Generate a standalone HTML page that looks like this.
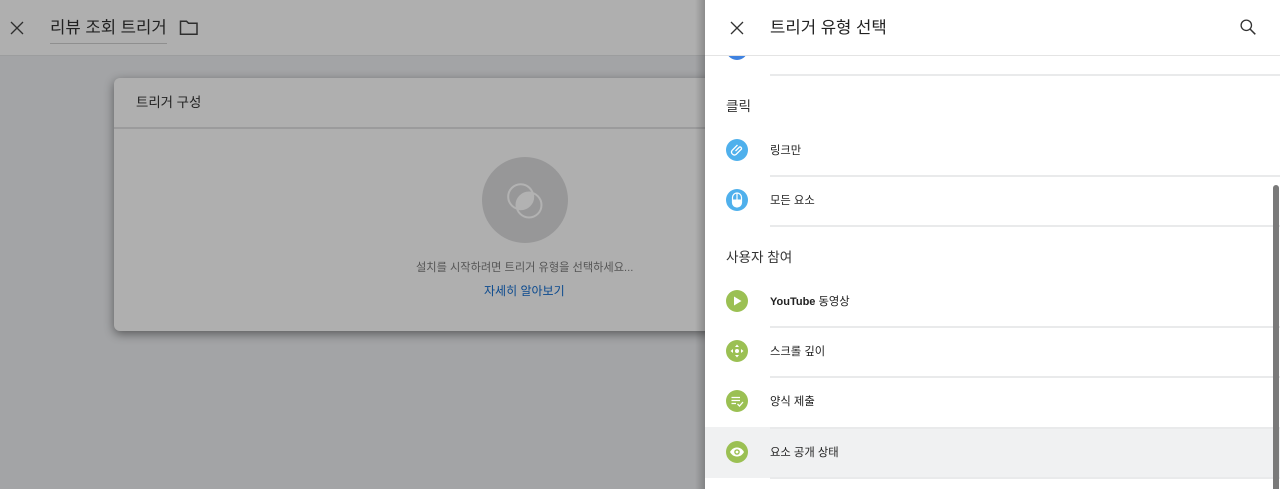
<!DOCTYPE html>
<html lang="ko"><head><meta charset="utf-8">
<style>
html,body{margin:0;padding:0;width:1280px;height:489px;overflow:hidden;background:#a3a4a6;font-family:"Liberation Sans","Noto Sans CJK KR",sans-serif;color:#202124}
.a{position:absolute}
.t{position:absolute;white-space:nowrap;line-height:1}
.line{position:absolute;left:770px;width:510px;height:1.5px;background:#e9eaeb}
.ic{position:absolute;left:726px;width:22px;height:22px;border-radius:50%}
.item{font-size:11.3px;left:770px;color:#222}
.sec{font-size:13.6px;left:726px;color:#333}
</style></head><body>
<div class="a" style="left:0;top:0;width:705px;height:56px;background:#afafaf;border-bottom:1px solid #9c9d9e;box-sizing:border-box"></div>
<svg class="a" style="left:9px;top:20px" width="16" height="16" viewBox="0 0 16 16"><path d="M2 2L14 14M14 2L2 14" stroke="#2e2e2e" stroke-width="1.300" fill="none"/></svg>
<div class="t" style="left:50px;top:20px;font-size:16.7px;color:#222">리뷰 조회 트리거</div>
<div class="a" style="left:50px;top:43px;width:117px;height:1px;background:#8f8f8f"></div>
<svg class="a" style="left:179px;top:19px" width="20" height="17" viewBox="0 0 20 17"><path d="M1.500 2.200H7.500L9.500 4.200H18V15.300H1.500Z" fill="none" stroke="#2e2e2e" stroke-width="1.500"/></svg>

<div class="a" style="left:114px;top:78px;width:620px;height:253px;background:#afafaf;border-radius:6px;box-shadow:0 3px 10px rgba(0,0,0,.45)"></div>
<div class="t" style="left:136px;top:96px;font-size:13.4px;color:#222">트리거 구성</div>
<div class="a" style="left:114px;top:127px;width:620px;height:1.500px;background:#9b9b9c"></div>
<div class="a" style="left:482px;top:157px;width:86px;height:86px;border-radius:50%;background:#979798"></div>
<svg class="a" style="left:505px;top:180px" width="40" height="40" viewBox="0 0 40 40"><defs><clipPath id="c"><circle cx="15.700" cy="16.700" r="12.500"/></clipPath></defs><circle cx="24" cy="25" r="12" fill="#b2b2b2" clip-path="url(#c)"/><circle cx="15.700" cy="16.700" r="12.500" fill="none" stroke="#b2b2b2" stroke-width="2"/><circle cx="24" cy="25" r="12.500" fill="none" stroke="#b2b2b2" stroke-width="2"/></svg>
<div class="t" style="left:416px;top:263px;font-size:11.2px;color:#555">설치를 시작하려면 트리거 유형을 선택하세요...</div>
<div class="t" style="left:484px;top:285px;font-size:12px;color:#0b4a8f">자세히 알아보기</div>

<div class="a" style="left:695px;top:0;width:10px;height:489px;background:linear-gradient(to right,rgba(0,0,0,0),rgba(0,0,0,.2))"></div>
<div class="a" style="left:705px;top:0;width:575px;height:489px;background:#fff"></div>
<div class="a" style="left:705px;top:427px;width:575px;height:51px;background:#f0f1f2"></div>
<div class="a" style="left:726px;top:38px;width:22px;height:22px;border-radius:50%;background:#3f82e0"></div>
<div class="a" style="left:705px;top:0;width:575px;height:56px;background:#fff;border-bottom:1px solid #e4e4e4;box-sizing:border-box"></div>
<svg class="a" style="left:729px;top:20px" width="16" height="16" viewBox="0 0 16 16"><path d="M2 2L14 14M14 2L2 14" stroke="#333" stroke-width="1.300" fill="none"/></svg>
<div class="t" style="left:770px;top:20px;font-size:16.7px;color:#222">트리거 유형 선택</div>
<svg class="a" style="left:1239px;top:18px" width="18" height="18" viewBox="0 0 18 18"><circle cx="7.300" cy="7.300" r="5.200" fill="none" stroke="#333" stroke-width="1.300"/><path d="M11 11L16.300 16.300" stroke="#333" stroke-width="1.500"/></svg>

<div class="line" style="top:74px"></div>
<div class="t sec" style="top:100px">클릭</div>
<div class="ic" style="top:139px;background:#4fb0ec"></div>
<svg class="a" style="left:726px;top:139px" width="22" height="22" viewBox="0 0 22 22"><path d="M9.500 12.500L13.500 8.500A1.600 1.600 0 0 1 15.500 10.500L10 16A2.900 2.900 0 0 1 6 12L11.500 6.500" fill="none" stroke="#fff" stroke-width="1.300" transform="translate(0 -0.500)"/></svg>
<div class="t item" style="top:146px">링크만</div>
<div class="line" style="top:175px"></div>
<div class="ic" style="top:189px;background:#4fb0ec"></div>
<svg class="a" style="left:726px;top:189px" width="22" height="22" viewBox="0 0 22 22"><rect x="6.500" y="4" width="9" height="14" rx="4.500" fill="none" stroke="#fff" stroke-width="1.200"/><path d="M6.500 10.500H15.500V13.500A4.500 4.500 0 0 1 6.500 13.500Z" fill="#fff"/><path d="M11 4V10.500" stroke="#fff" stroke-width="1.200"/></svg>
<div class="t item" style="top:196px">모든 요소</div>
<div class="line" style="top:225px"></div>
<div class="t sec" style="top:251px">사용자 참여</div>
<div class="ic" style="top:290px;background:#9bc053"></div>
<svg class="a" style="left:726px;top:290px" width="22" height="22" viewBox="0 0 22 22"><path d="M8 6.500L15.500 11L8 15.500Z" fill="#fff"/></svg>
<div class="t item" style="top:297px;font-weight:bold;font-size:11px">YouTube <span style="font-weight:normal;font-size:11.300px">동영상</span></div>
<div class="line" style="top:326px"></div>
<div class="ic" style="top:340px;background:#9bc053"></div>
<svg class="a" style="left:726px;top:340px" width="22" height="22" viewBox="0 0 22 22"><circle cx="11" cy="11" r="2" fill="#fff"/><path d="M11 4.500L13 7H9ZM11 17.500L13 15H9ZM4.500 11L7 9V13ZM17.500 11L15 9V13Z" fill="#fff"/></svg>
<div class="t item" style="top:347px">스크롤 깊이</div>
<div class="line" style="top:376px"></div>
<div class="ic" style="top:390px;background:#9bc053"></div>
<svg class="a" style="left:726px;top:390px" width="22" height="22" viewBox="0 0 22 22"><path d="M5.500 7.500H14M5.500 10.500H14M5.500 13.500H10" stroke="#fff" stroke-width="1.200"/><path d="M11.500 14L13.500 16L17 12" fill="none" stroke="#fff" stroke-width="1.300"/></svg>
<div class="t item" style="top:397px">양식 제출</div>
<div class="line" style="top:427px"></div>
<div class="ic" style="top:441px;background:#9bc053"></div>
<svg class="a" style="left:726px;top:441px" width="22" height="22" viewBox="0 0 22 22"><path d="M4 11C6 7.500 8.500 6.500 11 6.500S16 7.500 18 11C16 14.500 13.500 15.500 11 15.500S6 14.500 4 11Z" fill="#fff"/><circle cx="11" cy="11" r="2.800" fill="#9bc053"/><circle cx="11" cy="11" r="1.400" fill="#fff"/></svg>
<div class="t item" style="top:448px">요소 공개 상태</div>
<div class="line" style="top:477px"></div>
<div class="a" style="left:1273px;top:185px;width:6px;height:304px;background:#7a7a7a;border-radius:3px 3px 0 0"></div>
</body></html>
